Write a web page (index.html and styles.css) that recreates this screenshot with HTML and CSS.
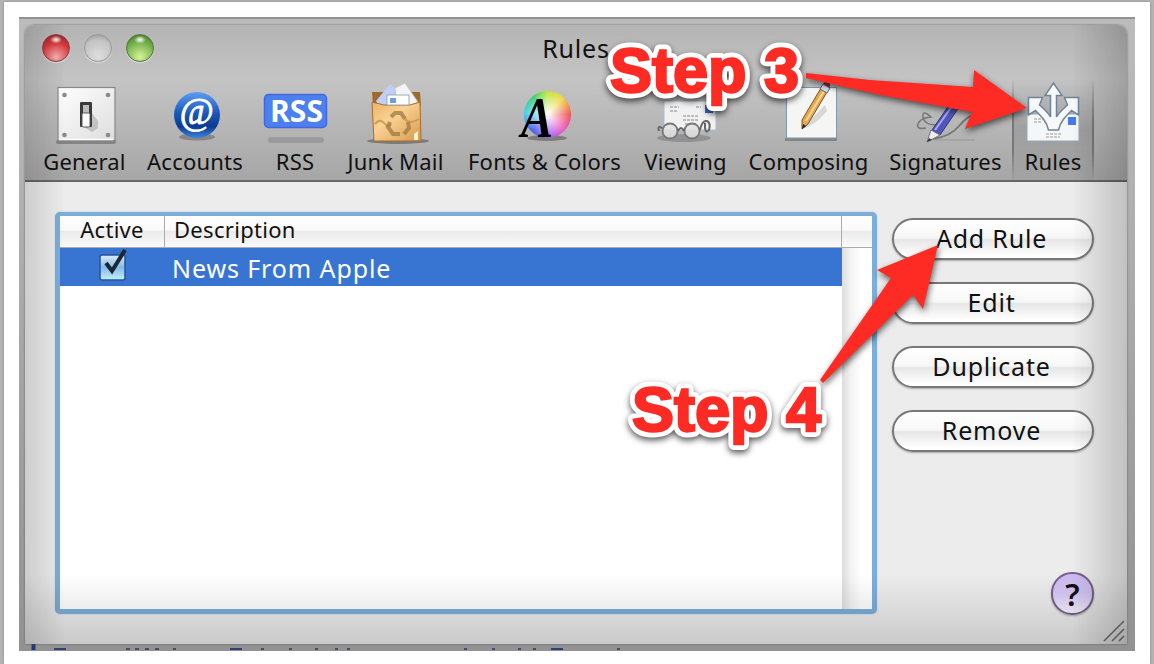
FILE: index.html
```
<!DOCTYPE html>
<html lang="en">
<head>
    <meta charset="UTF-8">
    <title>Rules</title>
    <link rel="stylesheet" href="styles.css">
</head>
<body>
    <div class="sheet">
        <div class="backdrop">
            <div class="window">
                <header class="top">
                    <div class="titlebar">
                        <div class="lights">
                            <span class="light red"></span>
                            <span class="light gray"></span>
                            <span class="light green"></span>
                        </div>
                        <h1>Rules</h1>
                    </div>
                    <nav class="toolbar">
                        <div class="tool general">
                            <svg viewBox="0 0 64 66">
                                <defs>
                                    <linearGradient id="plate" x1="0" y1="0" x2="1" y2="1"><stop offset="0" stop-color="#fff"/><stop offset="1" stop-color="#ddd"/></linearGradient>
                                </defs>
                                <rect x="3" y="60" width="60" height="4" rx="2" fill="#000" opacity=".25"/>
                                <rect x="5" y="7.500" width="57" height="53" fill="url(#plate)" stroke="#888" stroke-width="1.200"/>
                                <path d="M6 59.500h54" stroke="#fff" stroke-width="1.500"/>
                                <g fill="#8a8a8a"><circle cx="11.500" cy="15" r="2.300"/><circle cx="55" cy="15" r="2.300"/><circle cx="11.500" cy="55" r="2.300"/><circle cx="55" cy="55" r="2.300"/></g>
                                <path d="M36 29l9 12v7l-6 4-8-5z" fill="#000" opacity=".16"/>
                                <rect x="27" y="22" width="12" height="25" rx="1" fill="#3a3a3a"/>
                                <rect x="30" y="25" width="6" height="9" fill="#bbb"/>
                                <rect x="29" y="33" width="8" height="14" rx="1.500" fill="#fff" stroke="#555"/>
                            </svg>
                            <span>General</span>
                        </div>
                        <div class="tool accounts">
                            <svg viewBox="0 0 64 66">
                                <defs>
                                    <linearGradient id="ball" x1="0" y1="0" x2="0" y2="1"><stop offset="0" stop-color="#5b9df2"/><stop offset=".45" stop-color="#1b59bd"/><stop offset=".75" stop-color="#0b3a90"/><stop offset="1" stop-color="#3b86dc"/></linearGradient>
                                </defs>
                                <ellipse cx="34" cy="57" rx="18" ry="3.500" fill="#000" opacity=".25"/>
                                <circle cx="34" cy="35" r="23" fill="url(#ball)"/>
                                <text x="33.500" y="44" class="at">@</text>
                            </svg>
                            <span>Accounts</span>
                        </div>
                        <div class="tool rss">
                            <svg viewBox="0 0 64 66">
                                <rect x="5" y="57" width="56" height="6" rx="3" fill="#000" opacity=".13"/>
                                <rect x="1.500" y="14.500" width="62" height="33" rx="4" fill="#4c7ff0" stroke="#4169dc" stroke-width="1.500"/>
                                <text x="33.500" y="41.500" class="rss-text">RSS</text>
                            </svg>
                            <span>RSS</span>
                        </div>
                        <div class="tool junk">
                            <svg viewBox="0 0 64 66">
                                <defs>
                                    <linearGradient id="bag" x1="0" y1="0" x2="1" y2="1"><stop offset="0" stop-color="#e9b468"/><stop offset=".4" stop-color="#fad293"/><stop offset="1" stop-color="#d6994c"/></linearGradient>
                                </defs>
                                <ellipse cx="34" cy="61" rx="31" ry="3" fill="#000" opacity=".3"/>
                                <path d="M8 12h48l1 14H9z" fill="#a06a2c"/>
                                <path d="M12 21l14-17 11 9 3 12-25 2z" fill="#bfcff5"/>
                                <path d="M31 8l10-5 13 19-8 5-14-10z" fill="#f4f4f4" stroke="#bbb" stroke-width=".700"/>
                                <path d="M8 22l12 3 26 0 10-3 1 39H10z" fill="url(#bag)" stroke="#a76d2d"/>
                                <rect x="23" y="15" width="22" height="10" fill="#fff" stroke="#9aa9bd"/>
                                <rect x="26" y="18" width="6" height="5" fill="#6f9fe0"/>
                                <path d="M11 44q5-6 9-1t7 1M41 39q5 6 14 0" stroke="#d39a52" stroke-width="2" fill="none"/>
                                <path d="M27 37l4-4h6l4 6M44 42l1 6-5 6M36 54h-7l-5-7 2-5" fill="none" stroke="#99733f" stroke-width="4" opacity=".7"/>
                                <path d="M50 54l4-3v9h-4z" fill="#fff2cf"/>
                            </svg>
                            <span>Junk Mail</span>
                        </div>
                        <div class="tool fonts">
                            <svg viewBox="0 0 64 66">
                                <ellipse cx="34" cy="58" rx="20" ry="3" fill="#000" opacity=".3"/>
                                <foreignObject x="11" y="11" width="47" height="47"><div class="wheel"></div></foreignObject>
                                <text x="8" y="57" class="big-a" textLength="32" lengthAdjust="spacingAndGlyphs">A</text>
                            </svg>
                            <span>Fonts &amp; Colors</span>
                        </div>
                        <div class="tool viewing">
                            <svg viewBox="0 0 64 66">
                                <ellipse cx="30" cy="58" rx="27" ry="4" fill="#000" opacity=".18"/>
                                <rect x="10" y="21" width="52" height="29" fill="#f1f1f2" stroke="#a5bdd2"/>
                                <rect x="51" y="25" width="8" height="8" fill="#3768e0"/>
                                <path d="M16 27h9M16 31h7M42 27h5M29 36h16M29 40h16M31 44h12" stroke="#aaa" stroke-width="1.500" stroke-dasharray="3 1"/>
                                <g fill="#e2e2e2" fill-opacity=".85" stroke="#777" stroke-width="1.800"><circle cx="16" cy="51" r="7.500"/><circle cx="38" cy="51" r="7.500"/></g>
                                <path d="M24 51q3-6 6 0M8 48q-5-3-3 3M46 50q2-10 7-9 4 2 2 9-3 4-4-2v-5" fill="none" stroke="#666" stroke-width="2"/>
                            </svg>
                            <span>Viewing</span>
                        </div>
                        <div class="tool composing">
                            <svg viewBox="0 0 64 66">
                                <rect x="8" y="58" width="52" height="3" fill="#000" opacity=".25"/>
                                <rect x="9.500" y="7.500" width="50" height="50.500" fill="#f5f5f4" stroke="#7e98ad"/>
                                <path d="M25 49q13-3 25-18l-2-6z" fill="#000" opacity=".12"/>
                                <path d="M25 40L44 8l6 4-19 32-6 5z" fill="#e3a84f" stroke="#77542e"/>
                                <path d="M29 41L47 11" stroke="#f8d68a" stroke-width="2"/>
                                <path d="M43 9l3-5 7 4-3 5z" fill="#d9dde8" stroke="#667"/>
                                <path d="M46 4l2-3 5 2v5z" fill="#8d3043"/>
                                <path d="M25 49l1-5 3 2z" fill="#222"/>
                            </svg>
                            <span>Composing</span>
                        </div>
                        <div class="tool signatures">
                            <svg viewBox="0 0 64 66">
                                <path d="M12 48q-10 2-8-4t13-7q-9-8-8 0t14 8" fill="none" stroke="#777" stroke-width="1.500"/>
                                <path d="M21 60h40" stroke="#999"/>
                                <path d="M19 59q18-3 26-13T62 34" fill="none" stroke="#777" stroke-width="2"/>
                                <path d="M18 50L42 15l8 5-24 35z" fill="#5256ba" stroke="#34367e"/>
                                <path d="M21 50L44 18" stroke="#a9abed" stroke-width="2"/>
                                <path d="M17 50l9 5-13 7z" fill="#eee" stroke="#777"/>
                                <path d="M13 62l2-4 3 2z" fill="#333"/>
                            </svg>
                            <span>Signatures</span>
                        </div>
                        <div class="tool selected">
                            <svg viewBox="0 0 64 66">
                                <rect x="6" y="34" width="52" height="27" fill="#f5f6f7" stroke="#92a9bc"/>
                                <rect x="47" y="37" width="8" height="8" fill="#437ae8"/>
                                <path d="M13 39h9M13 42h7M25 54h16M25 57h14" stroke="#999" stroke-dasharray="3 1"/>
                                <path d="M27.500 50C26 42 20 36 14.500 30.500L7.500 35V17.500H21.500L18.500 25C24 30 27.500 33 29.500 37V15.500H24L32.500 3L41 15.500H35.500V37C37.500 33 41 30 46.500 25L43.500 17.500H57.500V35L50.500 30.500C45 36 39 42 37.500 50Z" fill="#f6f8fa" stroke="#6f8498" stroke-width="1.500"/>
                            </svg>
                            <span>Rules</span>
                        </div>
                    </nav>
                </header>
                <main>
                    <div class="rules-table">
                        <div class="row head">
                            <div class="active">Active</div>
                            <div class="description">Description</div>
                            <div class="corner"></div>
                        </div>
                        <div class="body">
                            <div class="rows">
                                <div class="row picked">
                                    <div class="active">
                                        <svg class="check" viewBox="0 0 32 34">
                                            <defs>
                                                <linearGradient id="box" x1="0" y1="0" x2="0" y2="1"><stop offset="0" stop-color="#dcebfa"/><stop offset=".5" stop-color="#83bbe8"/><stop offset="1" stop-color="#c5f1fb"/></linearGradient>
                                            </defs>
                                            <rect x="3" y="6" width="25" height="25" rx="2" fill="url(#box)" stroke="#285390" stroke-width="1.500"/>
                                            <path d="M9 14l6 8L28 1" fill="none" stroke="#1d2634" stroke-width="4"/>
                                        </svg>
                                    </div>
                                    <div class="description">News From Apple</div>
                                </div>
                            </div>
                            <div class="scrollbar"></div>
                        </div>
                    </div>
                    <aside>
                        <button class="add">Add Rule</button>
                        <button>Edit</button>
                        <button>Duplicate</button>
                        <button>Remove</button>
                        <button class="help">?</button>
                    </aside>
                </main>
                <svg class="grip" viewBox="0 0 22 22"><path d="M1 21L21 1M9 21L21 9M16 21l5-5" stroke="#777" stroke-width="1.500"/></svg>
            </div>
            <!-- tops of the text line behind the window -->
            <svg class="behind" viewBox="0 0 1116 7">
                <path d="M14.500 0v6" stroke="#1d3a77" stroke-width="4"/>
                <path d="M35 5h12M211 5h12M532 5h12" stroke="#30407a" stroke-width="2"/>
                <path d="M107 5h4m5 0h4m6 0h4m6 0h4m14 0h3M242 5h3m25 0h3m23 0h3m17 0h3m9 0h3M445 5h3m25 0h3m23 0h3m12 0h3m81 0h3" stroke="#454c6c" stroke-width="2"/>
            </svg>
        </div>
    </div>

    <svg class="notes" viewBox="0 0 1154 664">
        <g class="arrows">
            <path d="M806 73L870 80L973 87L974 70L1027 108L965 129L972 112L880 95L806 78z"/>
            <path d="M938 245L877 270L891 278L820 380L823 383L913 295L923 309z"/>
        </g>
        <g class="outline">
            <text x="610" y="91.500">Step 3</text>
            <text x="632" y="431">Step 4</text>
        </g>
        <g class="fill" aria-hidden="true">
            <text x="610" y="91.500">Step 3</text>
            <text x="632" y="431">Step 4</text>
        </g>
    </svg>
</body>
</html>
```
FILE: styles.css
```
* {
    box-sizing: border-box;
}
body {
    margin: 0;
    height: 664px;
    padding: 2px 4px 0;
    overflow: hidden;
    background: #b5b5b5;
    font-family: "Noto Sans", "Open Sans", sans-serif;
    color: #111;
}
.sheet {
    height: 662px;
    padding: 15px;
    background: #fff;
    box-shadow: 0 0 3px #888;
}
.backdrop {
    width: 1116px;
    height: 634px;
    padding: 6px 8px 0 6px;
    background: linear-gradient(#bcbcbc, #b2b2b2 25%, #929292);
    border-top: 2px solid #929292;
}
.window {
    height: 619px;
    position: relative;
    display: flex;
    flex-direction: column;
    background: #ececec;
    border-radius: 9px 9px 0 0;
    box-shadow: 0 0 2px #555;
}
/* darkened edges of the window */
.window::after {
    content: "";
    position: absolute;
    inset: 0;
    border-radius: 9px 9px 0 0;
    background:
        linear-gradient(90deg, rgba(0, 0, 0, .13), transparent 40px),
        linear-gradient(270deg, rgba(0, 0, 0, .18), transparent 55px),
        linear-gradient(0deg, rgba(0, 0, 0, .14), transparent 70px);
    pointer-events: none;
}
.top {
    height: 157px;
    background: linear-gradient(#b4b4b4, #c4c4c4 35%, #a6a6a6);
    border-bottom: 2px solid #666;
    border-radius: 9px 9px 0 0;
}
.titlebar {
    height: 54px;
    display: flex;
    align-items: center;
    position: relative;
    padding: 0 17px;
}
.titlebar h1 {
    flex: 1;
    margin: -9px 114px 0 0;
    text-align: center;
    font-size: 25px;
    font-weight: 450;
    letter-spacing: .8px;
}
.lights {
    display: flex;
    gap: 14px;
    width: 114px;
    margin-top: -8px;
}
.light {
    width: 28px;
    height: 28px;
    border-radius: 50%;
    border: 1px solid #999;
    box-shadow: 0 1px 1px #ddd;
}
.red {
    border-color: #943a3a;
    background: radial-gradient(ellipse 6px 4px at 50% 18%, #fff, transparent), radial-gradient(circle at 50% 85%, #f6b4b4, #da3a3e 55%, #812428);
}
.gray {
    background: radial-gradient(circle at 50% 80%, #dedede, #c2c2c2 65%, #8e8e8e);
}
.green {
    border-color: #4d7a37;
    background: radial-gradient(ellipse 6px 4px at 50% 18%, #fff, transparent), radial-gradient(circle at 50% 85%, #d5f397, #74b04b 60%, #3c6d28);
}
.toolbar {
    height: 101px;
    padding-left: 9px;
    display: grid;
    grid-template-columns: 101px 120px 80px 121px 177px 105px 141px 133px 82px;
}
.tool {
    display: flex;
    flex-direction: column;
    align-items: center;
    font-size: 22px;
    font-weight: 450;
    line-height: 28px;
    white-space: nowrap;
}
.tool svg {
    width: 64px;
    height: 66px;
    margin-top: 1px;
    overflow: visible;
}
.tool span {
    margin-top: 1px;
    letter-spacing: .2px;
}
.selected {
    border: solid;
    border-width: 0 2px;
    border-image: linear-gradient(transparent, #777 45%, #777 70%, transparent) 1;
    background: linear-gradient(rgba(0, 0, 0, 0), rgba(0, 0, 0, .12) 50%, rgba(0, 0, 0, .02));
}
.at {
    font: italic 37px "Liberation Serif", serif;
    fill: #fff;
    stroke: #fff;
    stroke-width: .8px;
    text-anchor: middle;
}
.rss-text {
    font: bold 30px "Open Sans", sans-serif;
    fill: #fff;
    text-anchor: middle;
}
.big-a {
    font: italic bold 56px "Liberation Serif", serif;
}
.wheel {
    width: 47px;
    height: 47px;
    border-radius: 50%;
    background: radial-gradient(circle, #fff, rgba(255, 255, 255, 0) 70%), conic-gradient(#bde53c, #f4d53d 12%, #f05353 25%, #ed55c5 37%, #a461ed 48%, #425be5 62%, #42cfe9 76%, #35cf70 89%, #bde53c);
}
main {
    flex: 1;
    display: flex;
    gap: 15px;
    padding: 30px 33px 0 30px;
}
.rules-table {
    width: 822px;
    height: 402px;
    display: flex;
    flex-direction: column;
    border: 5px solid #7caed8;
    border-top-width: 4px;
    border-radius: 5px;
    background: #fff;
    box-shadow: 0 0 2px #a9cbe8;
}
.row {
    display: flex;
}
.head {
    height: 32px;
    font-size: 22px;
    font-weight: 450;
    line-height: 26px;
    letter-spacing: .3px;
    background: linear-gradient(#fff, #fafafa 45%, #ebebeb 50%, #fafafa);
    border-bottom: 1px solid #aaa;
}
.active {
    width: 105px;
    text-align: center;
}
.head .active {
    border-right: 1px solid #aaa;
}
.description {
    flex: 1;
    padding-left: 9px;
}
.corner {
    width: 31px;
    border-left: 1px solid #aaa;
}
.body {
    flex: 1;
    display: flex;
}
.rows {
    flex: 1;
}
.picked {
    height: 38px;
    background: #3875d2;
    color: #fff;
    font-size: 25px;
    line-height: 40px;
    letter-spacing: .9px;
}
.picked .description {
    padding-left: 7px;
}
.check {
    width: 32px;
    height: 34px;
    display: block;
    margin: 1px auto 0;
}
.scrollbar {
    width: 30px;
    background: linear-gradient(90deg, #ddd, #f3f3f3 30%, #fff 65%);
}
aside {
    flex: 1;
    display: flex;
    flex-direction: column;
    gap: 22px;
    padding-top: 6px;
}
button {
    height: 42px;
    padding: 0 3px 2px 0;
    border: 2px solid #777;
    border-radius: 21px;
    background: linear-gradient(#fff, #f7f7f7 47%, #e6e6e6 52%, #fff 95%);
    box-shadow: 0 1px 2px #aaa;
    font: 450 25px/36px "Noto Sans", "Open Sans", sans-serif;
    letter-spacing: .8px;
    color: #111;
}
.help {
    width: 43px;
    height: 43px;
    padding: 0;
    margin-top: 98px;
    align-self: flex-end;
    border-color: #75628a;
    background: linear-gradient(#cdb8ef, #d6c7f7 50%, #faf3ff);
    font-size: 31px;
    font-weight: 600;
    letter-spacing: 0;
}
.grip {
    position: absolute;
    right: 2px;
    bottom: 2px;
    width: 22px;
    height: 22px;
}
.behind {
    display: block;
    width: 1116px;
    height: 7px;
    margin-left: -6px;
}
/* callouts drawn over the window */
.notes {
    position: absolute;
    top: 0;
    left: 0;
    width: 1154px;
    height: 664px;
    pointer-events: none;
}
.notes text {
    font: bold 63px "Liberation Sans", Arial, sans-serif;
}
.arrows {
    fill: #fd2b24;
    filter: drop-shadow(1px 3px 3px rgba(0, 0, 0, .6));
}
.outline {
    fill: #fff;
    stroke: #fff;
    stroke-width: 12px;
    stroke-linejoin: round;
    filter: drop-shadow(0 3px 3px rgba(0, 0, 0, .65));
}
.fill {
    fill: #fd2b24;
    stroke: #fd2b24;
    stroke-width: 2.4px;
}
```
